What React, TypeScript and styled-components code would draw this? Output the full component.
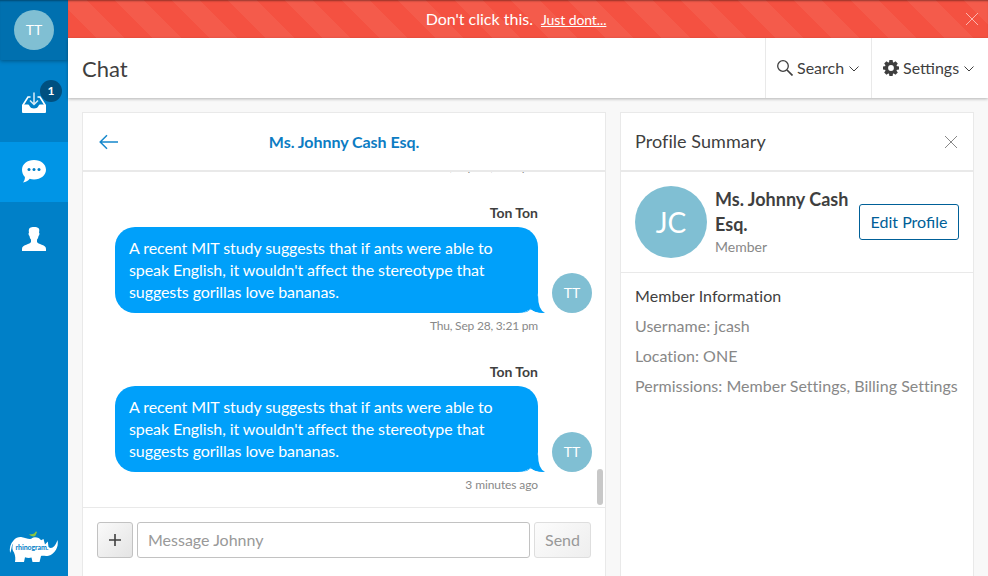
import React from 'react';
import styled, { createGlobalStyle } from 'styled-components';

const GlobalStyle = createGlobalStyle`
  * { box-sizing: border-box; }
  html, body { margin: 0; height: 100%; overflow: hidden; }
  body {
    font-family: Lato, "Liberation Sans", sans-serif;
    font-size: 16px;
    color: #3f3f3f;
    background: #f8f8f8;
  }
  button, input { font: inherit; }
`;

const Shell = styled.div`
  display: flex;
  width: 988px;
  height: 576px;
  background: #f8f8f8;
  overflow: hidden;
`;

const Sidebar = styled.nav`
  width: 68px;
  flex: none;
  display: flex;
  flex-direction: column;
  background: #0080c8;
`;

const SidebarUser = styled.div`
  height: 60px;
  display: flex;
  align-items: center;
  justify-content: center;
  background: #0070af;
  box-shadow: inset 0 2px 2px -1px rgba(0, 0, 0, 0.35), 0 1px 4px rgba(0, 0, 0, 0.35);
  margin-bottom: 14px;
`;

const Avatar = styled.div<{ $size: number; $font: number }>`
  flex: none;
  width: ${p => p.$size}px;
  height: ${p => p.$size}px;
  padding-bottom: 1px;
  border-radius: 50%;
  background: #80bfd3;
  color: #fff;
  font-size: ${p => p.$font}px;
  display: flex;
  align-items: center;
  justify-content: center;
`;

const NavItem = styled.a<{ $active?: boolean; $shift?: number }>`
  position: relative;
  height: ${p => (p.$active ? 60 : 68)}px;
  display: flex;
  align-items: center;
  justify-content: center;
  background: ${p => (p.$active ? '#0095e6' : 'transparent')};
  svg { display: block; margin-top: ${p => p.$shift ?? 0}px; }
`;

const NavBadge = styled.span`
  position: absolute;
  left: 40px;
  top: 6px;
  width: 22px;
  height: 22px;
  border-radius: 50%;
  background: #005080;
  color: #fff;
  font-size: 12px;
  font-weight: 700;
  line-height: 22px;
  text-align: center;
`;

const LogoWrap = styled.div`
  margin-top: auto;
  padding: 0 0 13px 9px;
  svg { display: block; }
`;

const Main = styled.div`
  flex: 1;
  min-width: 0;
  display: flex;
  flex-direction: column;
`;

const Banner = styled.div`
  height: 38px;
  flex: none;
  display: grid;
  grid-template-columns: 1fr auto 1fr;
  align-items: center;
  padding: 0 9px 0 0;
  color: #fff;
  background: repeating-linear-gradient(45deg, #f45141 0, #f45141 20px, #f45b4b 20px, #f45b4b 40px);
  box-shadow: inset 0 2px 2px -1px rgba(0, 0, 0, 0.4);
  svg { justify-self: end; }
`;

const BannerText = styled.div`
  grid-column: 2;
  display: flex;
  align-items: baseline;
  gap: 8px;
  padding-bottom: 2px;
  margin-left: -15px;
  a { font-size: 14px; letter-spacing: -0.1px; text-decoration: underline; }
`;

const TopBar = styled.header`
  position: relative;
  height: 60px;
  flex: none;
  display: flex;
  align-items: stretch;
  background: #fff;
  box-shadow: 0 1px 3px rgba(0, 0, 0, 0.28);
`;

const PageTitle = styled.h1`
  flex: 1;
  margin: 0;
  padding: 1px 0 0 14px;
  font-size: 22px;
  font-weight: 400;
  line-height: 60px;
`;

const TopAction = styled.div<{ $width: number }>`
  width: ${p => p.$width}px;
  display: flex;
  align-items: center;
  padding-left: 11px;
  border-left: 1px solid #e9e9e9;
  svg { flex: none; }
  span { margin: 0 5px 0 4px; padding-bottom: 1px; }
`;

const Content = styled.main`
  flex: 1;
  min-height: 0;
  display: grid;
  grid-template-columns: 524px 354px;
  gap: 14px;
  padding: 14px 14px 0;
`;

const Panel = styled.section`
  display: flex;
  flex-direction: column;
  min-height: 0;
  background: #fff;
  border: 1px solid #e9e9e9;
  border-bottom: 0;
`;

const PanelHeader = styled.div`
  height: 59px;
  flex: none;
  display: grid;
  grid-template-columns: 30px 1fr 30px;
  align-items: center;
  padding: 0 14px;
  border-bottom: 2px solid #e9e9e9;
`;

const ContactName = styled.div`
  text-align: center;
  font-weight: 700;
  font-size: 16px;
  letter-spacing: -0.05px;
  color: #0c7cc3;
`;

const PanelTitle = styled.h2`
  grid-column: span 2;
  margin: 0;
  padding-bottom: 2px;
  font-size: 18px;
  font-weight: 400;
  letter-spacing: 0.06px;
`;

const HeaderIconEnd = styled.span`
  justify-self: end;
  padding-right: 1px;
  svg { display: block; }
`;

const Messages = styled.div`
  position: relative;
  flex: 1;
  min-height: 0;
  display: flex;
  flex-direction: column;
  justify-content: flex-end;
  overflow: hidden;
  padding: 0 13px 14px 32px;
`;

const Message = styled.article`
  flex: none;
  display: grid;
  grid-template-columns: 423px 40px;
  column-gap: 14px;
  height: 159px;
  padding-top: 30px;
  grid-template-rows: 22px 86px 21px;
`;

const Sender = styled.div`
  grid-column: 1;
  text-align: right;
  font-size: 14px;
  font-weight: 700;
  line-height: 15px;
`;

const Bubble = styled.div`
  position: relative;
  grid-column: 1;
  padding: 10px 14px;
  border-radius: 20px;
  background: #00a0fa;
  color: #fff;
  line-height: 22px;
  letter-spacing: -0.085px;
`;

const Tail = styled.svg`
  position: absolute;
  right: -7px;
  bottom: 0;
`;

const AvatarCell = styled.div`
  display: flex;
  align-items: flex-end;
`;

const Stamp = styled.time`
  grid-column: 1;
  text-align: right;
  font-size: 12px;
  line-height: 26px;
  letter-spacing: ${p => (p.dateTime ? '-0.2px' : '-0.1px')};
  color: #888;
`;

const ScrollThumb = styled.div`
  position: absolute;
  right: 2px;
  bottom: 2px;
  width: 6px;
  height: 36px;
  border-radius: 3px;
  background: #c8c8c8;
`;

const Composer = styled.form`
  height: 69px;
  flex: none;
  display: flex;
  align-items: flex-start;
  gap: 4px;
  padding: 14px;
  border-top: 1px solid #e9e9e9;
`;

const Button = styled.button<{ $kind: 'add' | 'send' | 'outline' }>`
  height: 36px;
  flex: none;
  display: flex;
  align-items: center;
  justify-content: center;
  padding: 0 0 ${p => (p.$kind === 'add' ? 0 : 2)}px;
  width: ${p => ({ add: 36, send: 57, outline: 100 })[p.$kind]}px;
  border-radius: 3px;
  border: 1px solid ${p => ({ add: '#c2c2c2', send: '#dedede', outline: '#006098' })[p.$kind]};
  color: ${p => ({ add: '#3f3f3f', send: '#999', outline: '#006098' })[p.$kind]};
  background: ${p =>
    ({
      add: 'linear-gradient(135deg, #fafafa, #e4e4e4)',
      send: 'linear-gradient(135deg, #fcfcfc, #eeeeee)',
      outline: '#fff',
    })[p.$kind]};
`;

const MessageInput = styled.input`
  flex: 1;
  min-width: 0;
  height: 36px;
  padding: 0 10px 1px;
  border: 1px solid #c2c2c2;
  border-radius: 3px;
  outline: 0;
  &::placeholder { color: #999; opacity: 1; }
`;

const ProfileRow = styled.div`
  height: 101px;
  flex: none;
  display: flex;
  align-items: center;
  padding: 0 14px;
  border-bottom: 1px solid #e9e9e9;
`;

const ProfileName = styled.div`
  flex: 1;
  margin-left: 8px;
  strong { display: block; font-size: 18px; line-height: 25px; font-weight: 700; }
  small { display: block; font-size: 14px; line-height: 20px; color: #888; }
`;

const InfoList = styled.div`
  padding: 8px 14px;
  line-height: 30px;
  color: #888;
  h3 { margin: 0; font-size: 16px; font-weight: 400; letter-spacing: 0.06px; color: #3f3f3f; }
  p { margin: 0; white-space: nowrap; letter-spacing: 0.02px; }
`;

const Close = ({ color }: { color: string }) => (
  <svg width="14" height="14" viewBox="0 0 14 14" fill="none" stroke={color} strokeWidth="1">
    <path d="M1 1 13 13M13 1 1 13" />
  </svg>
);

const Chevron = () => (
  <svg width="10" height="10" viewBox="0 0 10 10" fill="none" stroke="#3f3f3f" strokeWidth="1">
    <path d="M.5 3.5 5 8 9.5 3.5" />
  </svg>
);

const SearchIcon = () => (
  <svg width="16" height="16" viewBox="0 0 16 16" fill="none" stroke="#3f3f3f" strokeWidth="1.3">
    <circle cx="6" cy="6" r="5.3" />
    <path d="m10 10 5.5 5.5" strokeWidth="1.7" />
  </svg>
);

const GearIcon = () => (
  <svg width="16" height="16" viewBox="0 0 16 16">
    <circle cx="8" cy="8" r="4.5" fill="none" stroke="#3f3f3f" strokeWidth="3.2" />
    <g fill="#3f3f3f">
      {[0, 45, 90, 135, 180, 225, 270, 315].map(a => (
        <path key={a} d="M6.400 0h3.200l.5 3H5.900z" transform={`rotate(${a} 8 8)`} />
      ))}
    </g>
  </svg>
);

const InboxIcon = () => (
  <svg width="24" height="22" viewBox="0 0 24 22">
    <path
      fill="#fff"
      d="M0 12.500h5.500c1.200 0 1.700.7 2.200 1.700.8 1.500 2.200 2.200 4.300 2.200s3.500-.7 4.300-2.200c.5-1 1-1.700 2.200-1.700H24V20q0 1-1 1H1q-1 0-1-1z"
    />
    <path d="M8.500 5H6L1 13M15.500 5H18l5 8" fill="none" stroke="#fff" strokeWidth="1.600" />
    <path d="M12 .5v11.500M8 8.500l4 4 4-4" fill="none" stroke="#d9ecf7" strokeWidth="1.500" />
  </svg>
);

const ChatIcon = () => (
  <svg width="24" height="23" viewBox="0 0 24 23">
    <path
      fill="#fff"
      d="M12 0c6.800 0 12 4.200 12 9.700s-5.200 9.700-12 9.700c-1.600 0-3-.2-4.300-.6C6 20.800 3.800 22.300 1 22.400c1.400-1.500 2-3.300 1.900-5.400C1.100 15.200 0 12.600 0 9.700 0 4.200 5.200 0 12 0z"
    />
    <g fill="#0080c8">
      <circle cx="7" cy="9.500" r="1.500" />
      <circle cx="12" cy="9.500" r="1.500" />
      <circle cx="17" cy="9.500" r="1.500" />
    </g>
  </svg>
);

const PersonIcon = () => (
  <svg width="24" height="24" viewBox="0 0 24 24">
    <path
      fill="#fff"
      d="M12 0c2.200 0 3.500.4 4.600 1.200.9.800.8 2.400.4 4.300.8.600.500 2.700-.5 3.400-.3 1.700-.8 2.800-1.500 3.600v2.600c.5 1.300 2.400 1.800 4.700 2.600 3 1.100 4.300 2 4.300 4.300v2H0v-2c0-2.300 1.300-3.200 4.300-4.300C6.600 16.900 8.500 16.400 9 15.100v-2.600c-.7-.8-1.200-1.900-1.500-3.600C6.500 8.200 6.200 6.100 7 5.500 6.600 3.600 6.700 2 7.800 1 9 .2 10.200 0 12 0z"
    />
  </svg>
);

const RhinoLogo = () => (
  <svg width="50" height="32" viewBox="0 0 50 32">
    <path
      fill="#fff"
      d="M4.500 9.500C7 6.500 10 5.800 13 6.200c3 .4 5 1.700 8 1.800 2-.1 2.500-1.700 5-1.700 2.700 0 5 1 6 3L34.500 8l1.500 5.500 2.800-3 .7 5.500c3 2.600 6.700 0 9-7C50 16 46 23 39.500 24.800c-3 .8-5-.3-7.500.2L30.500 31h-7l-1-4.500c-2.500.8-4.500.3-6.500-.2L15 31H6c.5-3 .5-6-1-9.500-1.800-2-2.200-5.500-.8-9C2 15 3 18.500 1 22c-.7-5 .5-9.500 3.500-12.500z"
    />
    <path fill="#8bc53f" d="M20 3.200c2.500.2 4 0 5.500-1L27 .3l1 1-1 2c-.3 1.400-1.300 2.200-2.500 2.200-1.500 0-3-1-4.500-2.300z" />
    <text x="6.500" y="19" fill="#0080c8" fontFamily="Lato, sans-serif" fontSize="7" fontWeight="700" textLength="33">
      rhinogram.
    </text>
  </svg>
);

const quote =
  "A recent MIT study suggests that if ants were able to speak English, it wouldn't affect the stereotype that suggests gorillas love bananas.";

const messages = [
  { stamp: 'Thu, Sep 28, 3:21 pm', date: '09-28' },
  { stamp: 'Thu, Sep 28, 3:21 pm', date: '09-28' },
  { stamp: '3 minutes ago' },
];

export default function App() {
  return (
    <>
      <GlobalStyle />
      <Shell>
        <Sidebar>
          <SidebarUser>
            <Avatar $size={40} $font={14}>TT</Avatar>
          </SidebarUser>
          <NavItem $shift={-10}>
            <InboxIcon />
            <NavBadge>1</NavBadge>
          </NavItem>
          <NavItem $active $shift={-1}>
            <ChatIcon />
          </NavItem>
          <NavItem $shift={6}>
            <PersonIcon />
          </NavItem>
          <LogoWrap>
            <RhinoLogo />
          </LogoWrap>
        </Sidebar>
        <Main>
          <Banner>
            <BannerText>
              Don't click this. <a>Just dont...</a>
            </BannerText>
            <Close color="#fbb5ae" />
          </Banner>
          <TopBar>
            <PageTitle>Chat</PageTitle>
            <TopAction $width={106}>
              <SearchIcon />
              <span>Search</span>
              <Chevron />
            </TopAction>
            <TopAction $width={117}>
              <GearIcon />
              <span>Settings</span>
              <Chevron />
            </TopAction>
          </TopBar>
          <Content>
            <Panel>
              <PanelHeader>
                <svg width="24" height="16" viewBox="0 0 24 16" fill="none" stroke="#1688cc" strokeWidth="1.5">
                  <path d="M21 8H3.500M10 1.200 3.200 8 10 14.800" />
                </svg>
                <ContactName>Ms. Johnny Cash Esq.</ContactName>
              </PanelHeader>
              <Messages>
                {messages.map((m, i) => (
                  <Message key={i}>
                    <Sender>Ton Ton</Sender>
                    <Bubble>
                      {quote}
                      <Tail width="24" height="20" viewBox="0 0 24 20">
                        <path d="M0 20q6-1 9-4l8-14q0 15 7 17.800Q15 20.500 9.500 16.500 6 20 0 20z" fill="#00a0fa" />
                        <path d="M2 20q5-.5 8-3.500 3 2.800 8 3.500z" fill="#fff" />
                      </Tail>
                    </Bubble>
                    <AvatarCell>
                      <Avatar $size={40} $font={14}>TT</Avatar>
                    </AvatarCell>
                    <Stamp dateTime={m.date}>{m.stamp}</Stamp>
                  </Message>
                ))}
                <ScrollThumb />
              </Messages>
              <Composer>
                <Button type="button" $kind="add" aria-label="Add">
                  <svg width="12" height="12" viewBox="0 0 12 12" stroke="#3f3f3f" strokeWidth="1.600">
                    <path d="M6 0v12M0 6h12" />
                  </svg>
                </Button>
                <MessageInput placeholder="Message Johnny" />
                <Button type="button" $kind="send">Send</Button>
              </Composer>
            </Panel>
            <Panel>
              <PanelHeader>
                <PanelTitle>Profile Summary</PanelTitle>
                <HeaderIconEnd>
                  <Close color="#888" />
                </HeaderIconEnd>
              </PanelHeader>
              <ProfileRow>
                <Avatar $size={72} $font={28}>JC</Avatar>
                <ProfileName>
                  <strong>Ms. Johnny Cash Esq.</strong>
                  <small>Member</small>
                </ProfileName>
                <Button type="button" $kind="outline">Edit Profile</Button>
              </ProfileRow>
              <InfoList>
                <h3>Member Information</h3>
                <p>Username: jcash</p>
                <p>Location: ONE</p>
                <p>Permissions: Member Settings, Billing Settings</p>
              </InfoList>
            </Panel>
          </Content>
        </Main>
      </Shell>
    </>
  );
}
